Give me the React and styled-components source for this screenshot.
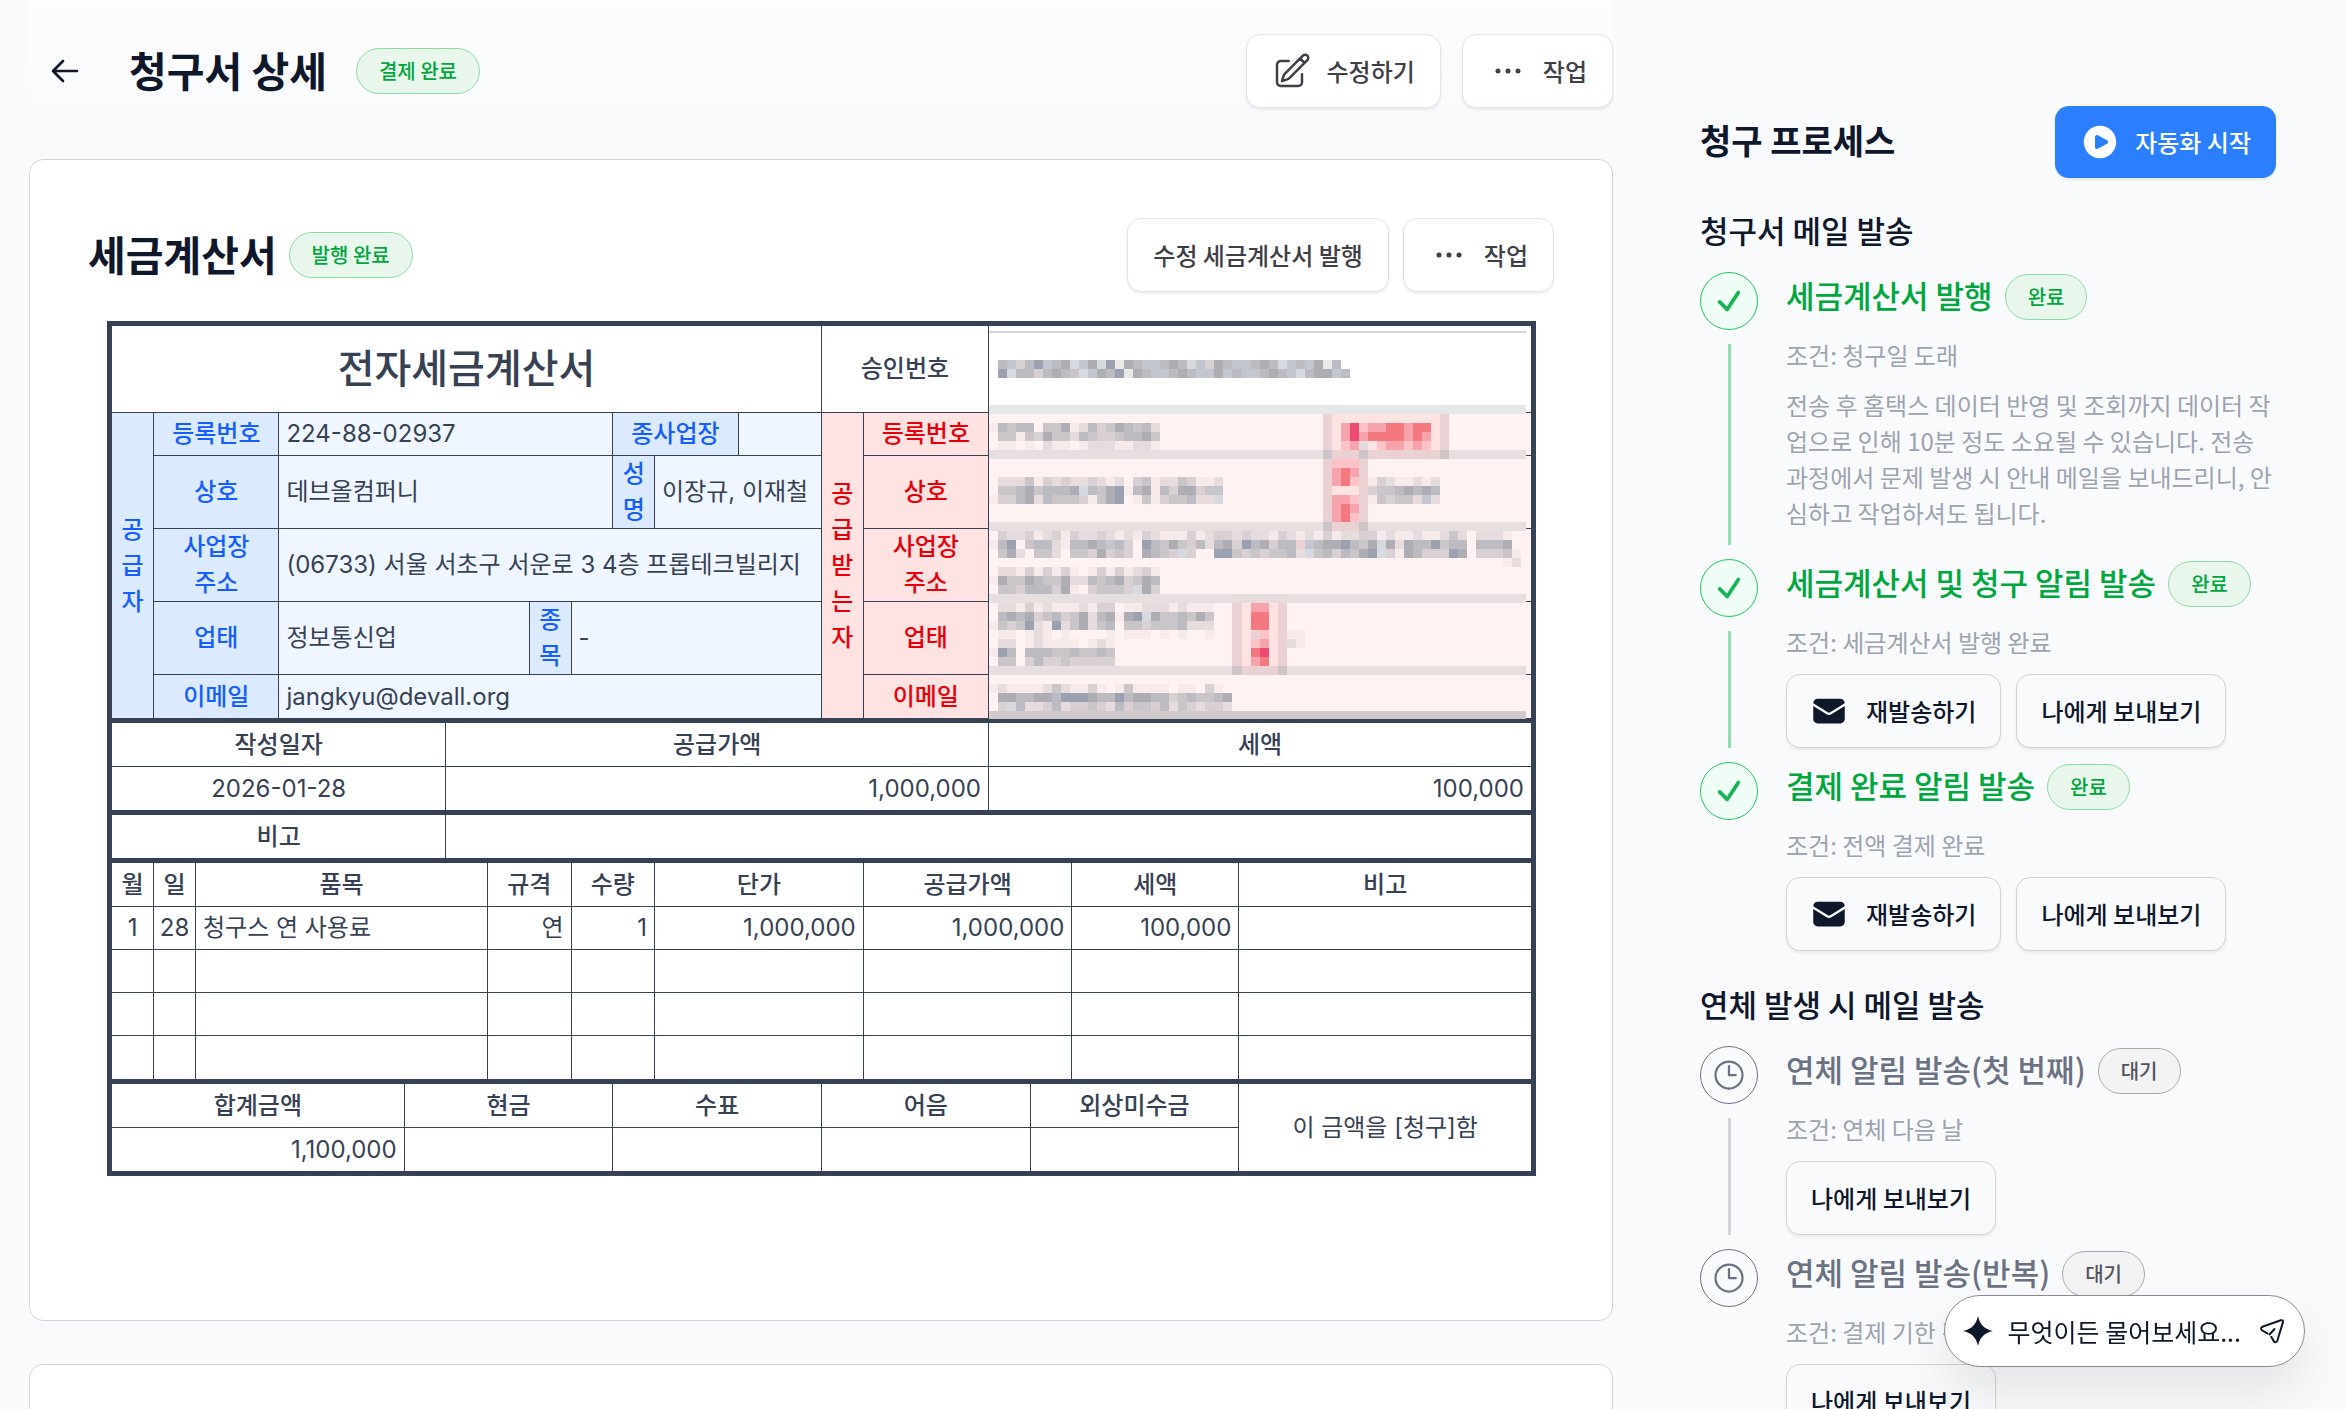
import React from 'react'
import styled, { createGlobalStyle } from 'styled-components'
import {
  HiEnvelope,
  HiOutlineArrowLeft,
  HiOutlineCheck,
  HiOutlineClock,
  HiOutlineEllipsisHorizontal,
  HiOutlinePencilSquare,
  HiPlayCircle,
} from 'react-icons/hi2'

// 9px blocks covering the private half of the invoice, one string per row
const MASK_ROWS = {
  1: '.checahcblhblawbchhcbclhebchhcbclhchbwc',
  2: '.alccecbcdlhbcawbchhcbchhbhchhcbchlcbbhc',
  6: 'z'.repeat(60),
  7: '.'.repeat(37) + '61111111111116',
  8: 'gcdcc.ddbgfcedbcdcf' + '.'.repeat(18) + '61352334434416',
  9: '.ddgdebddfcdeedccbd' + '.'.repeat(18) + '61353444434316',
  10: '.gg.g.fgg.gfffggffg' + '.'.repeat(18) + '6123f123323216',
  11: '7'.repeat(37) + '86668666666668' + '7'.repeat(9),
  12: '.'.repeat(37) + '62226',
  13: '.'.repeat(37) + '63436',
  14: '.fffdgefeffefgf.edgffdeggf' + '.'.repeat(11) + '63426gefggfgf',
  15: '.ddcbdcccblcdbagcbgcebbedh' + '.'.repeat(11) + '61116eddcbcbc',
  16: 'geecbfcdddegdba.gdgeddcffl' + '.'.repeat(11) + '63326gdeddfhf',
  17: '.'.repeat(37) + '63436',
  18: '.'.repeat(37) + '63426',
  19: '7'.repeat(37) + '86668' + '7'.repeat(18),
  20: '.effegfegeffefgfgefgggegfeefeffgefgfgegffeegfggfggfdf.fffg',
  21: 'gca.dccfgccbchce.acdbdecfcbeacbecc6hcbbacdblbfbccadcc.cccb',
  22: '.dbf.ddf.ddebede.bcdele..aadededdcfldcecdbalegbceeeab.eeedg',
  23: '.'.repeat(57) + 'gf',
  24: '.ffgegegeg.gegegfeg',
  25: 'gbddbcddbffcdcbedbc',
  26: '.ddecccebg.edddelbe',
  27: '7'.repeat(27) + 'ffffff' + '7'.repeat(27),
  28: '.ffgegfgggfgee.ggfffgfggg..613316',
  29: '.cbcbedcedbfcbgbalbddcdbd..614416',
  30: 'gdedafgafdbfdc.ddedddcfff..614416',
  31: '.gg.gfg.g....g.ggg.g.g..g..616216gg',
  32: '.ff.gfgggg.gfg.............612316fg',
  33: 'gac.cccddcddcd.............614516',
  34: '.dd.eceedeeeee.............613416',
  35: '7'.repeat(27) + '866668' + '7'.repeat(27),
  37: 'gfggggfdfggeg.gdgggg.gg.eg',
  38: '.bbccbbcaaabccacbbccedcddcb',
  39: '.elcffecfeedefceddecfdefeef',
  40: 'y'.repeat(60),
}

const MASK_COLORS = {
  a: '#9ba1b0',
  b: '#aeadb4',
  c: '#bdbbc2',
  d: '#cac5c9',
  e: '#d8d0d3',
  f: '#e6dcde',
  g: '#f6eaeb',
  h: '#c2c7cf',
  l: '#d6d9e0',
  w: '#e9ebe9',
  y: '#d0cacd',
  z: '#e6e7ea',
  1: '#ffe2e2',
  2: '#fbc2c7',
  3: '#f7a3ab',
  4: '#f4797f',
  5: '#ec4a72',
  6: '#e9d1d4',
  7: '#e7dedf',
  8: '#cdc4c8',
}

const ITEM_COLUMNS = [
  ['월', 1],
  ['일', 1],
  ['품목', 7],
  ['규격', 2],
  ['수량', 2],
  ['단가', 5],
  ['공급가액', 5],
  ['세액', 4],
  ['비고', 7],
]

const BILLING_STEPS = [
  {
    title: '세금계산서 발행',
    condition: '청구일 도래',
    note: '전송 후 홈택스 데이터 반영 및 조회까지 데이터 작업으로 인해 10분 정도 소요될 수 있습니다. 전송 과정에서 문제 발생 시 안내 메일을 보내드리니, 안심하고 작업하셔도 됩니다.',
    done: true,
  },
  { title: '세금계산서 및 청구 알림 발송', condition: '세금계산서 발행 완료', done: true, resend: true, preview: true },
  { title: '결제 완료 알림 발송', condition: '전액 결제 완료', done: true, resend: true, preview: true },
]

const OVERDUE_STEPS = [
  { title: '연체 알림 발송(첫 번째)', condition: '연체 다음 날', preview: true },
  { title: '연체 알림 발송(반복)', condition: '결제 기한 경과', preview: true },
]

const Mask = () => (
  <MaskSvg viewBox="0 0 536 393" preserveAspectRatio="none" shapeRendering="crispEdges" aria-hidden="true">
    <rect x="0" y="0" width="536" height="83" fill="#fff" />
    <rect x="0" y="83" width="536" height="310" fill="#fef2f2" />
    <rect x="0" y="5" width="536" height="2" fill="#d1d5db" />
    {Object.entries(MASK_ROWS).map(([row, line]) =>
      line.split('').map((key, col) =>
        key === '.' ? null : (
          <rect key={`${row}-${col}`} x={col * 9} y={25 + row * 9} width="9" height="9" fill={MASK_COLORS[key]} />
        )
      )
    )}
  </MaskSvg>
)

const SparkIcon = () => (
  <svg width="30" height="30" viewBox="0 0 30 30" fill="currentColor" aria-hidden="true">
    <path d="M15 0c1.800 8.600 6.400 13.200 15 15-8.600 1.800-13.200 6.400-15 15-1.800-8.600-6.400-13.200-15-15 8.600-1.800 13.200-6.400 15-15z" />
  </svg>
)

const SendIcon = () => (
  <svg width="28" height="28" viewBox="0 0 28 28" fill="none" stroke="currentColor" strokeWidth="2" strokeLinecap="round" strokeLinejoin="round" aria-hidden="true">
    <path d="M9.500 16.500 4.200 13.300c-1.700-1-1.500-2.900.3-3.500L22.800 3.300c1.600-.5 2.600.5 2.100 2.100l-5.600 18.300c-.6 1.800-2.500 2-3.500.4l-2.600-4.300" />
    <path d="m11.500 17.500 5-5.500" />
  </svg>
)

const Invoice = () => (
  <Sheet>
    <Table>
      <colgroup>
        {Array.from({ length: 34 }, (_, i) => (
          <col key={i} />
        ))}
      </colgroup>
      <Group>
        <tr>
          <TitleCell colSpan={17}>전자세금계산서</TitleCell>
          <Th colSpan={4}>승인번호</Th>
          <MaskCell colSpan={13}>
            <Mask />
          </MaskCell>
        </tr>
        <tr>
          <Th $tone="blue" rowSpan={5}>공급자</Th>
          <Th $tone="blue" colSpan={3}>등록번호</Th>
          <Td $tone="blue" colSpan={8}>224-88-02937</Td>
          <Th $tone="blue" colSpan={3}>종사업장</Th>
          <Td $tone="blue" colSpan={2} />
          <Th $tone="red" rowSpan={5}>공급받는자</Th>
          <Th $tone="red" colSpan={3}>등록번호</Th>
          <Td $tone="red" colSpan={13} />
        </tr>
        <tr>
          <Th $tone="blue" colSpan={3}>상호</Th>
          <Td $tone="blue" colSpan={8}>데브올컴퍼니</Td>
          <Th $tone="blue">성명</Th>
          <Td $tone="blue" colSpan={4}>이장규, 이재철</Td>
          <Th $tone="red" colSpan={3}>상호</Th>
          <Td $tone="red" colSpan={13} />
        </tr>
        <tr>
          <Th $tone="blue" colSpan={3}>사업장<br />주소</Th>
          <Td $tone="blue" colSpan={13}>(06733) 서울 서초구 서운로 3 4층 프롭테크빌리지</Td>
          <Th $tone="red" colSpan={3}>사업장<br />주소</Th>
          <Td $tone="red" colSpan={13} />
        </tr>
        <tr>
          <Th $tone="blue" colSpan={3}>업태</Th>
          <Td $tone="blue" colSpan={6}>정보통신업</Td>
          <Th $tone="blue">종목</Th>
          <Td $tone="blue" colSpan={6}>-</Td>
          <Th $tone="red" colSpan={3}>업태</Th>
          <Td $tone="red" colSpan={13} />
        </tr>
        <tr>
          <Th $tone="blue" colSpan={3}>이메일</Th>
          <Td $tone="blue" colSpan={13}>jangkyu@devall.org</Td>
          <Th $tone="red" colSpan={3}>이메일</Th>
          <Td $tone="red" colSpan={13} />
        </tr>
      </Group>
      <Group>
        <tr>
          <Th colSpan={8}>작성일자</Th>
          <Th colSpan={13}>공급가액</Th>
          <Th colSpan={13}>세액</Th>
        </tr>
        <tr>
          <Td $align="center" colSpan={8}>2026-01-28</Td>
          <Td $align="right" colSpan={13}>1,000,000</Td>
          <Td $align="right" colSpan={13}>100,000</Td>
        </tr>
      </Group>
      <Group>
        <tr>
          <Th colSpan={8}>비고</Th>
          <Td colSpan={26} />
        </tr>
      </Group>
      <Group>
        <tr>
          {ITEM_COLUMNS.map(([label, span]) => (
            <Th key={label} colSpan={span}>{label}</Th>
          ))}
        </tr>
        <tr>
          <Td $align="center" $tight>1</Td>
          <Td $align="center" $tight>28</Td>
          <Td colSpan={7}>청구스 연 사용료</Td>
          <Td $align="right" colSpan={2}>연</Td>
          <Td $align="right" colSpan={2}>1</Td>
          <Td $align="right" colSpan={5}>1,000,000</Td>
          <Td $align="right" colSpan={5}>1,000,000</Td>
          <Td $align="right" colSpan={4}>100,000</Td>
          <Td colSpan={7} />
        </tr>
        {[0, 1, 2].map((row) => (
          <tr key={row}>
            {ITEM_COLUMNS.map(([label, span]) => (
              <Td key={label} colSpan={span} />
            ))}
          </tr>
        ))}
      </Group>
      <Group>
        <tr>
          <Th colSpan={7}>합계금액</Th>
          <Th colSpan={5}>현금</Th>
          <Th colSpan={5}>수표</Th>
          <Th colSpan={5}>어음</Th>
          <Th colSpan={5}>외상미수금</Th>
          <Td $align="center" colSpan={7} rowSpan={2}>이 금액을 [청구]함</Td>
        </tr>
        <tr>
          <Td $align="right" colSpan={7}>1,100,000</Td>
          <Td colSpan={5} />
          <Td colSpan={5} />
          <Td colSpan={5} />
          <Td colSpan={5} />
        </tr>
      </Group>
    </Table>
  </Sheet>
)

const Timeline = ({ steps }) => (
  <StepList>
    {steps.map((step, i) => (
      <Step key={step.title}>
        <Rail>
          <Circle $done={step.done}>{step.done ? <HiOutlineCheck size={30} /> : <HiOutlineClock size={36} />}</Circle>
          {i < steps.length - 1 && <Line $done={step.done} />}
        </Rail>
        <StepBody>
          <StepHead>
            <StepTitle $done={step.done}>{step.title}</StepTitle>
            <Badge $idle={!step.done}>{step.done ? '완료' : '대기'}</Badge>
          </StepHead>
          <StepText>조건: {step.condition}</StepText>
          {step.note && <StepNote>{step.note}</StepNote>}
          {step.preview && (
            <StepActions>
              {step.resend && (
                <OutlineButton type="button">
                  <IconSlot>
                    <HiEnvelope size={36} />
                  </IconSlot>
                  재발송하기
                </OutlineButton>
              )}
              <OutlineButton type="button">나에게 보내보기</OutlineButton>
            </StepActions>
          )}
        </StepBody>
      </Step>
    ))}
  </StepList>
)

const App = () => (
  <Page>
    <GlobalStyle />
    <Main>
      <Header>
        <BackButton type="button" aria-label="뒤로">
          <HiOutlineArrowLeft size={32} />
        </BackButton>
        <Title>청구서 상세</Title>
        <Badge>결제 완료</Badge>
        <Actions $gap="21px">
          <Button type="button">
            <IconSlot>
              <HiOutlinePencilSquare size={40} />
            </IconSlot>
            수정하기
          </Button>
          <Button type="button">
            <IconSlot>
              <HiOutlineEllipsisHorizontal size={40} />
            </IconSlot>
            작업
          </Button>
        </Actions>
      </Header>
      <Card>
        <CardHead>
          <Title as="h2">세금계산서</Title>
          <Badge>발행 완료</Badge>
          <Actions $gap="14px">
            <Button type="button">수정 세금계산서 발행</Button>
            <Button type="button">
              <IconSlot>
                <HiOutlineEllipsisHorizontal size={40} />
              </IconSlot>
              작업
            </Button>
          </Actions>
        </CardHead>
        <Invoice />
      </Card>
      <Card />
    </Main>
    <Aside>
      <AsideHead>
        <AsideTitle>청구 프로세스</AsideTitle>
        <PrimaryButton type="button">
          <IconSlot>
            <HiPlayCircle size={40} />
          </IconSlot>
          자동화 시작
        </PrimaryButton>
      </AsideHead>
      <SectionTitle>청구서 메일 발송</SectionTitle>
      <Timeline steps={BILLING_STEPS} />
      <SectionTitle>연체 발생 시 메일 발송</SectionTitle>
      <Timeline steps={OVERDUE_STEPS} />
    </Aside>
    <AskButton type="button">
      <SparkIcon />
      <AskText>무엇이든 물어보세요...</AskText>
      <SendIcon />
    </AskButton>
  </Page>
)

const GlobalStyle = createGlobalStyle`
  * {
    box-sizing: border-box;
  }
  body {
    margin: 0;
    background: #f9fafc;
    color: #0f172b;
    font-family: 'Noto Sans CJK KR', Inter, sans-serif;
    font-size: 24px;
    line-height: 36px;
  }
  h1, h2, h3, h4, p, ul {
    margin: 0;
    padding: 0;
  }
  button {
    font: inherit;
    cursor: pointer;
  }
  svg {
    flex-shrink: 0;
  }
`
const Page = styled.div`
  display: flex;
  height: 100vh;
  overflow: hidden;
`
const Main = styled.main`
  flex: 1;
  min-width: 0;
  padding-left: 29px;
`
const Header = styled.header`
  display: flex;
  align-items: center;
  padding: 34px 0 51px;
  background: linear-gradient(#fdfdfd, #f9fafc 110px);
`
const BackButton = styled.button`
  display: flex;
  padding: 20px;
  margin-right: 28px;
  border: 0;
  background: none;
  color: inherit;
  svg {
    stroke-width: 2;
  }
`
const Title = styled.h1`
  padding-bottom: 4px;
  font-size: 41px;
  line-height: 56px;
  font-weight: 700;
`
const Badge = styled.span`
  flex-shrink: 0;
  padding: 0 22px;
  border: 1px solid ${({ $idle }) => ($idle ? '#a9a9b0' : '#8adba6')};
  border-radius: 23px;
  background: ${({ $idle }) => ($idle ? '#f3f3f4' : '#e9f6ec')};
  color: ${({ $idle }) => ($idle ? '#52525c' : '#00a63e')};
  font-size: 20px;
  line-height: 44px;
  font-weight: 500;
  ${Header} & {
    margin-left: 29px;
  }
`
const Actions = styled.div`
  display: flex;
  gap: ${({ $gap }) => $gap};
  margin-left: auto;
`
const Button = styled.button`
  display: flex;
  align-items: center;
  gap: 15px;
  height: 74px;
  padding: 0 25px;
  border: 1px solid #e4e4e7;
  border-radius: 14px;
  background: #fff;
  box-shadow: 0 2px 3px rgba(0, 0, 0, 0.07);
  color: #3f3f47;
  font-weight: 500;
  white-space: nowrap;
`
const OutlineButton = styled(Button)`
  padding: 0 24px;
  border-color: #d1d3d8;
  background: #f9fafc;
  color: #0f172b;
`
const PrimaryButton = styled(Button)`
  height: 72px;
  border: 0;
  background: #2b7fff;
  color: #fff;
`
const IconSlot = styled.span`
  display: flex;
  width: 40px;
`
const Card = styled.section`
  min-height: 200px;
  margin-bottom: 43px;
  padding: 58px 58px 144px;
  border: 1px solid #d1d5db;
  border-radius: 14px;
  background: #fff;
`
const CardHead = styled.div`
  display: flex;
  align-items: center;
  gap: 12px;
  margin-bottom: 29px;
`
const Sheet = styled.div`
  margin: 0 18px 0 19px;
  border: 5px solid #364153;
`
const Table = styled.table`
  width: 100%;
  border-collapse: collapse;
  border-style: hidden;
  table-layout: fixed;
  color: #364153;
  font-family: Inter, 'Noto Sans CJK KR', sans-serif;
`
const Group = styled.tbody`
  border-top: 5px solid #364153;
  border-bottom: 5px solid #364153;
  tr:first-child > *,
  tr:last-child > * {
    height: 43px;
  }
`
const Td = styled.td`
  box-sizing: content-box;
  height: 42px;
  padding: ${({ $tight }) => ($tight ? '0' : '0 7px')};
  border: 1px solid #364153;
  background: ${({ $tone }) => ({ blue: '#eff6ff', red: '#fef2f2' })[$tone] || '#fff'};
  text-align: ${({ $align }) => $align || 'left'};
`
const Th = styled.th`
  box-sizing: content-box;
  height: 42px;
  padding: 0 7px;
  border: 1px solid #364153;
  background: ${({ $tone }) => ({ blue: '#dbeafe', red: '#ffe2e2' })[$tone] || '#fff'};
  color: ${({ $tone }) => ({ blue: '#155dfc', red: '#e7000b' })[$tone] || '#364153'};
  font-weight: 500;
`
const TitleCell = styled(Th)`
  padding: 15px 7px;
  font-size: 40px;
  line-height: 56px;
`
const MaskCell = styled(Td)`
  position: relative;
`
const MaskSvg = styled.svg`
  position: absolute;
  top: 0;
  left: 0;
  width: calc(100% - 5px);
  height: 393px;
`
const Aside = styled.aside`
  flex: 0 0 732px;
  padding: 106px 69px 0 87px;
`
const AsideHead = styled.div`
  display: flex;
  align-items: center;
  justify-content: space-between;
`
const AsideTitle = styled.h2`
  padding-bottom: 4px;
  font-size: 34px;
  line-height: 44px;
  font-weight: 700;
`
const SectionTitle = styled.h3`
  margin: 30px 0 20px;
  font-size: 31px;
  line-height: 44px;
  font-weight: 500;
  ul + & {
    margin-top: 17px;
  }
`
const StepList = styled.ul`
  list-style: none;
`
const Step = styled.li`
  display: flex;
  gap: 28px;
`
const Rail = styled.div`
  display: flex;
  flex-direction: column;
  align-items: center;
`
const Circle = styled.div`
  display: flex;
  align-items: center;
  justify-content: center;
  width: 58px;
  height: 58px;
  border: 1px solid ${({ $done }) => ($done ? '#22c55e' : '#6a7282')};
  border-radius: 50%;
  background: ${({ $done }) => ($done ? '#f0fdf6' : 'transparent')};
  color: ${({ $done }) => ($done ? '#16b455' : '#6a7282')};
  ${({ $done }) => $done && 'svg { stroke-width: 3; }'}
`
const Line = styled.div`
  flex: 1;
  width: 3px;
  margin: 14px 0;
  background: ${({ $done }) => ($done ? '#8fe0ac' : '#d1d3db')};
`
const StepBody = styled.div`
  flex: 1;
  min-width: 0;
  padding-bottom: 14px;
`
const StepHead = styled.div`
  display: flex;
  align-items: center;
  gap: 12px;
  height: 49px;
  margin-bottom: 16px;
`
const StepTitle = styled.h4`
  padding-bottom: 3px;
  font-size: 31px;
  line-height: 44px;
  font-weight: 500;
  white-space: nowrap;
  color: ${({ $done }) => ($done ? '#00a63e' : '#6a7282')};
`
const StepText = styled.p`
  color: #9ca3af;
`
const StepNote = styled(StepText)`
  margin: 14px 0;
`
const StepActions = styled.div`
  display: flex;
  gap: 15px;
  margin-top: 14px;
`
const AskButton = styled.button`
  position: fixed;
  right: 40px;
  bottom: 42px;
  display: flex;
  align-items: center;
  height: 72px;
  padding: 0 18px;
  border: 1px solid #8a8a94;
  border-radius: 36px;
  background: #fff;
  box-shadow: 0 25px 50px rgba(0, 0, 0, 0.09);
  color: #0f172b;
`
const AskText = styled.span`
  margin: 0 17px 0 15px;
  font-size: 25px;
`

export default App
